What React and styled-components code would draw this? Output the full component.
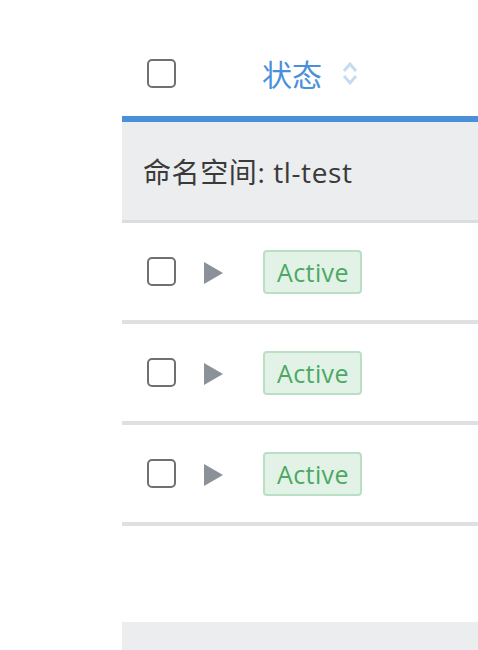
import React from 'react'
import styled, { createGlobalStyle } from 'styled-components';

//global
const GlobalStyle = createGlobalStyle`
    body {
        margin: 0;
        background: #ffffff;
        font-family: "Open Sans", "Noto Sans CJK SC", sans-serif;
    }
`

//styled Components
const Page = styled.div`
    width: 478px;
    height: 650px;
    overflow: hidden;
    padding-left: 122px;
    box-sizing: border-box;
`
const Table = styled.div`
    width: 400px;
`
const HeadRow = styled.div`
    display: grid;
    grid-template-columns: 68px 73px 1fr;
    align-items: center;
    height: 86px;
    padding-top: 30px;
    border-bottom: 6px solid #4a90d9;
`
const Cell = styled.div`
    display: flex;
    align-items: center;
    padding-left: ${p => p.$pad || 0}px;
`
const HeadTitle = styled.span`
    font-size: 30px;
    color: #4a90d9;
    margin-right: 20px;
    margin-left: -1px;
`
const GroupRow = styled.div`
    display: flex;
    align-items: center;
    height: 98px;
    padding-left: 21px;
    background: #ebedef;
    border-bottom: 3px solid #dcdddf;
    font-size: 28px;
    letter-spacing: 0.6px;
    color: #3a3a3a;
`
const Row = styled.div`
    display: grid;
    grid-template-columns: 68px 73px 1fr;
    align-items: center;
    height: 97px;
    border-bottom: 4px solid #dfe0e1;
`
const Check = styled.div`
    width: 25px;
    height: 25px;
    border: 2px solid #707070;
    border-radius: 5px;
    background: #fff;
`
const Expand = styled.div`
    width: 0;
    height: 0;
    margin-top: 3px;
    border-top: 11.5px solid transparent;
    border-bottom: 11.5px solid transparent;
    border-left: 19px solid #8a9199;
`
const Badge = styled.span`
    display: inline-flex;
    align-items: center;
    height: 40px;
    padding: 0 11px 0 12px;
    border: 2px solid #b9e0c5;
    border-radius: 4px;
    background: #e2f2e6;
    color: #4ca864;
    font-size: 25px;
    letter-spacing: 0.4px;
`
const Spacer = styled.div`
    height: 96px;
`
const Footer = styled.div`
    height: 40px;
    background: #ebedef;
`

const SortIcon = () => (
  <svg width="16" height="27" viewBox="0 0 16 27" fill="none">
    <path d="M2 11 L8 4 L14 11" stroke="#c6dcf2" strokeWidth="3" />
    <path d="M2 16 L8 23 L14 16" stroke="#c6dcf2" strokeWidth="3" />
  </svg>
)

const rows = ['Active', 'Active', 'Active']

const App = () => {
  return (
    <Page>
        <GlobalStyle />
        <Table>
            <HeadRow>
                <Cell $pad={25}><Check /></Cell>
                <Cell />
                <Cell>
                    <HeadTitle>状态</HeadTitle>
                    <SortIcon />
                </Cell>
            </HeadRow>
            <GroupRow>命名空间: tl-test</GroupRow>
            {rows.map((state, i) => (
                <Row key={i}>
                    <Cell $pad={25}><Check /></Cell>
                    <Cell $pad={14}><Expand /></Cell>
                    <Cell><Badge>{state}</Badge></Cell>
                </Row>
            ))}
            <Spacer />
            <Footer />
        </Table>
    </Page>
  )
}

export default App
